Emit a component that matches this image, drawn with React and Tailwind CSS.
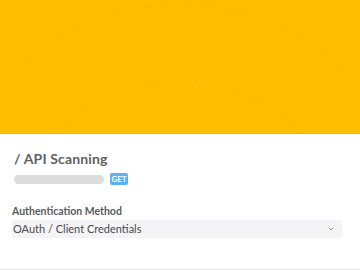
import React from 'react'
import { ChevronDown } from 'lucide-react'

const App = () => {
  return (
    <div className="w-[360px] h-[270px] bg-white overflow-hidden flex flex-col" style={{ fontFamily: "'Lato', 'Noto Sans', sans-serif" }}>
      {/* hero */}
      <div className="h-[134px] w-full bg-[#ffbe00] border-b border-[#f5b400] overflow-hidden shrink-0">
        <svg width="360" height="134" viewBox="0 0 360 134" className="block">
          <circle cx="180" cy="246" r="241" fill="none" stroke="#e9a900" strokeOpacity="0.55" strokeWidth="1" strokeDasharray="4 6" />
          <circle cx="180" cy="249" r="169" fill="none" stroke="#e9a900" strokeOpacity="0.55" strokeWidth="1" strokeDasharray="4 6" />
        </svg>
      </div>

      <div className="flex-1 flex flex-col px-3 border-b border-[#ececec]">
        <h1 className="mt-[15px] ml-[2px] text-[14px] font-bold leading-5 text-[#5f5f66] tracking-[0.01em]">/ API Scanning</h1>
        <div className="mt-[4px] ml-[2px] flex items-center gap-[6px]">
          <div className="w-[90px] h-[9px] rounded-full bg-[#dcdcdc]"></div>
          <span className="h-[12px] w-[18px] text-center rounded-[2px] bg-[#5cb0f6] text-white text-[8px] font-bold leading-[12px]">GET</span>
        </div>

        <label className="mt-[19px] text-[10.5px] font-bold leading-[14px] text-[#5a5a60]">Authentication Method</label>
        <div className="mt-[2px] h-[18px] w-[330px] bg-[#f4f4f6] flex items-center justify-between pl-[1px] pr-[7px]">
          <span className="text-[11px] leading-4 text-[#4a4a50]">OAuth / Client Credentials</span>
          <ChevronDown className="w-[8px] h-[8px] text-[#777]" strokeWidth={2.5} />
        </div>
      </div>
    </div>
  )
}

export default App
